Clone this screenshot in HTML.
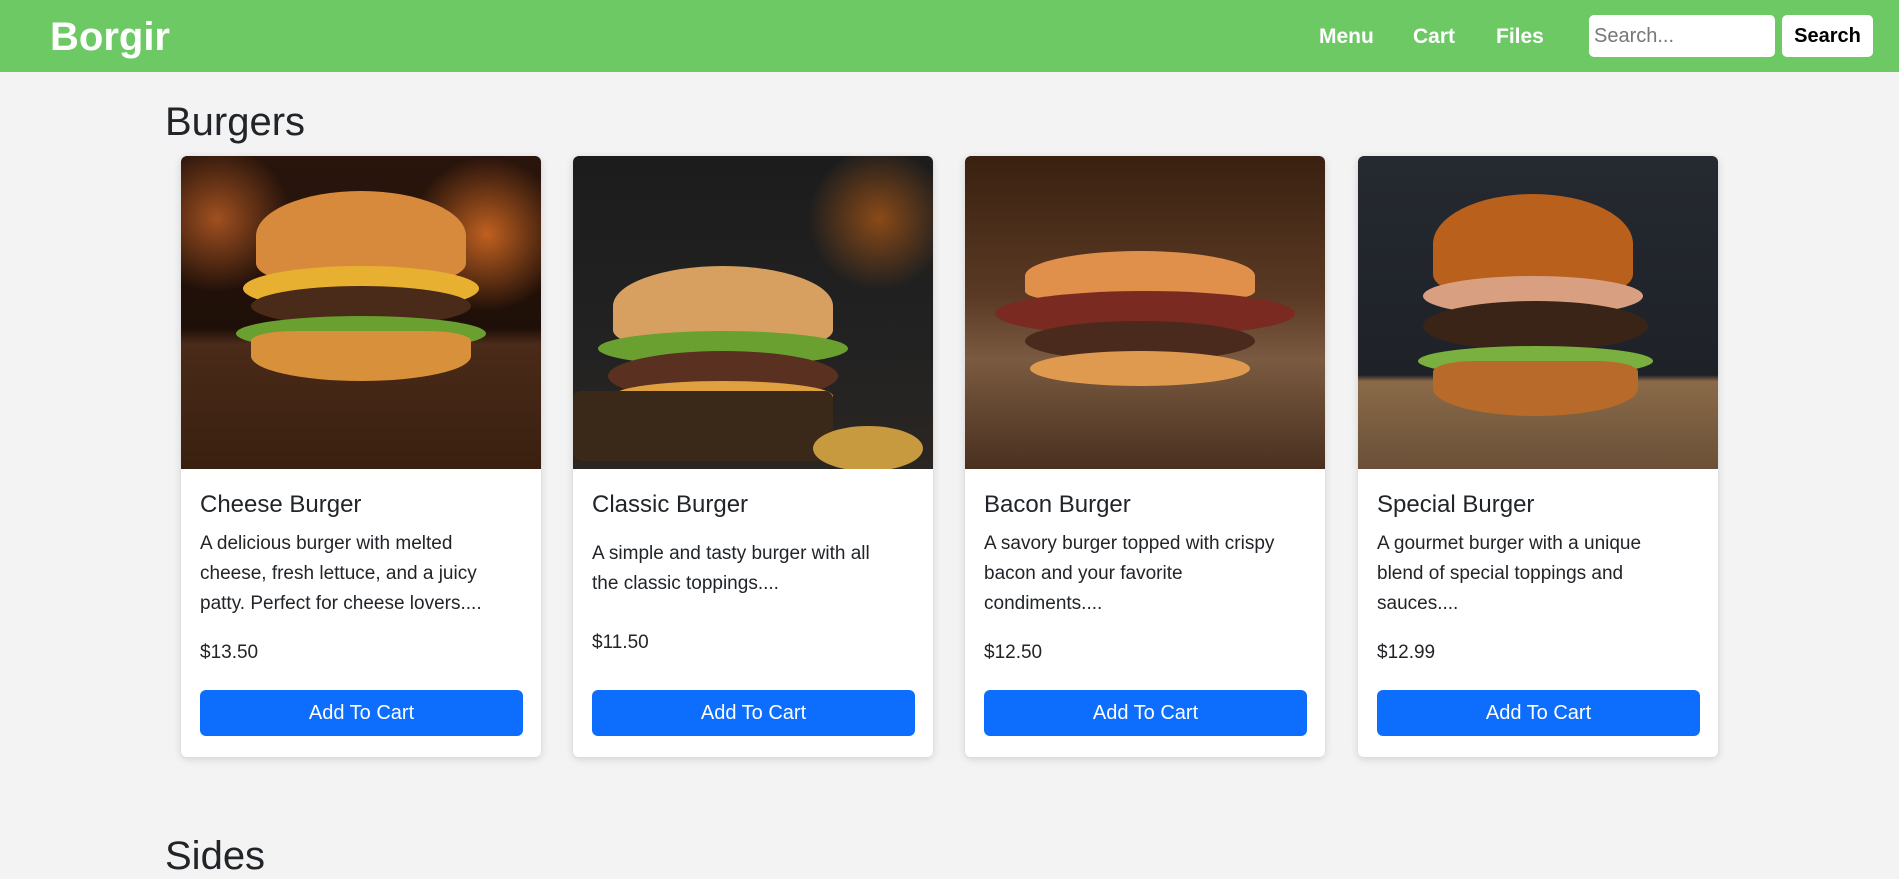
<!DOCTYPE html>
<html><head><meta charset="utf-8"><style>
*{margin:0;padding:0;box-sizing:border-box}
body{width:1899px;height:868px;overflow:hidden;background:#f3f3f3;font-family:"Liberation Sans",Arial,sans-serif;color:#212529;position:relative}
.nav{position:absolute;left:0;top:0;width:1899px;height:72px;background:#6cc964}
.logo{position:absolute;left:50px;top:15px;font-size:40px;font-weight:bold;color:#fff}
.nl{position:absolute;top:25px;font-size:21px;font-weight:bold;color:#fff}
.inp{position:absolute;left:1589px;top:15px;width:186px;height:42px;background:#fff;border-radius:5px;font-size:20px;color:#777;padding:10px 5px}
.sb{position:absolute;left:1782px;top:15px;width:91px;height:42px;background:#fff;border-radius:5px;font-size:20px;font-weight:bold;color:#000;text-align:center;line-height:42px}
h2{position:absolute;left:165px;font-weight:normal;font-size:40px;color:#212529}
.card{position:absolute;top:156px;width:360px;height:601px;background:#fff;border-radius:6px;box-shadow:0 2px 8px rgba(0,0,0,.15);overflow:hidden}
.img{height:313px;position:relative;overflow:hidden}
.t{position:absolute;left:19px;top:335px;font-size:24px}
.d{position:absolute;left:19px;width:300px;font-size:19px;line-height:30px}
.p{position:absolute;left:19px;font-size:19px}
.b{position:absolute;left:19px;top:534px;width:323px;height:46px;background:#0d6efd;border-radius:6px;color:#fff;font-size:20px;text-align:center;line-height:46px}
.bl{position:absolute;border-radius:50%}
</style></head><body>
<div class="nav"><div class="logo">Borgir</div>
<div class="nl" style="left:1319px">Menu</div><div class="nl" style="left:1413px">Cart</div><div class="nl" style="left:1496px">Files</div>
<div class="inp">Search...</div><div class="sb">Search</div></div>
<h2 style="top:100px">Burgers</h2>

<div class="card" style="left:181px"><div class="img" style="background:radial-gradient(circle at 85% 25%,#c06020 0,transparent 20%),radial-gradient(circle at 10% 20%,#a05020 0,transparent 18%),linear-gradient(#2a150c 0,#1e0f08 55%,#4a2a18 60%,#3a2010 100%)">
<div class="bl" style="left:75px;top:35px;width:210px;height:90px;background:#d88a3c;border-radius:50% 50% 20% 20%"></div>
<div class="bl" style="left:62px;top:110px;width:236px;height:45px;background:#e8b030"></div>
<div class="bl" style="left:70px;top:130px;width:220px;height:40px;background:#4a2a18"></div>
<div class="bl" style="left:55px;top:160px;width:250px;height:35px;background:#6aa030"></div>
<div class="bl" style="left:70px;top:175px;width:220px;height:50px;background:#d8903a;border-radius:20% 20% 50% 50%"></div></div>
<div class="t">Cheese Burger</div><div class="d" style="top:373px">A delicious burger with melted cheese, fresh lettuce, and a juicy patty. Perfect for cheese lovers....</div><div class="p" style="top:486px">$13.50</div><div class="b">Add To Cart</div></div>

<div class="card" style="left:573px"><div class="img" style="background:radial-gradient(circle at 85% 20%,#8a4a18 0,transparent 18%),linear-gradient(#1c1c1c 0,#222 60%,#2a2622 100%)">
<div class="bl" style="left:40px;top:110px;width:220px;height:80px;background:#d8a060;border-radius:50% 50% 20% 20%"></div>
<div class="bl" style="left:25px;top:175px;width:250px;height:35px;background:#6aa030"></div>
<div class="bl" style="left:35px;top:195px;width:230px;height:50px;background:#5a3020"></div>
<div class="bl" style="left:40px;top:225px;width:220px;height:30px;background:#e0a040"></div>
<div class="bl" style="left:0;top:235px;width:260px;height:70px;background:#3a2818;border-radius:8px"></div>
<div class="bl" style="left:240px;top:270px;width:110px;height:45px;background:#c89a40"></div></div>
<div class="t">Classic Burger</div><div class="d" style="top:383px">A simple and tasty burger with all the classic toppings....</div><div class="p" style="top:476px">$11.50</div><div class="b">Add To Cart</div></div>

<div class="card" style="left:965px"><div class="img" style="background:linear-gradient(#3a2010 0,#5a3a24 45%,#7a5a40 65%,#4a3020 100%)">
<div class="bl" style="left:60px;top:95px;width:230px;height:50px;background:#e0904a;border-radius:50% 50% 20% 20%"></div>
<div class="bl" style="left:30px;top:135px;width:300px;height:45px;background:#7a2a20"></div>
<div class="bl" style="left:60px;top:165px;width:230px;height:40px;background:#4a2a1c"></div>
<div class="bl" style="left:65px;top:195px;width:220px;height:35px;background:#e09a50"></div></div>
<div class="t">Bacon Burger</div><div class="d" style="top:373px">A savory burger topped with crispy bacon and your favorite condiments....</div><div class="p" style="top:486px">$12.50</div><div class="b">Add To Cart</div></div>

<div class="card" style="left:1358px"><div class="img" style="background:linear-gradient(#252a30 0,#1e2228 70%,#8a6a48 72%,#6a5038 100%)">
<div class="bl" style="left:75px;top:38px;width:200px;height:100px;background:#b8601c;border-radius:50% 50% 20% 20%"></div>
<div class="bl" style="left:65px;top:120px;width:220px;height:40px;background:#d8a080"></div>
<div class="bl" style="left:65px;top:145px;width:225px;height:50px;background:#3a2418"></div>
<div class="bl" style="left:60px;top:190px;width:235px;height:30px;background:#7ab040"></div>
<div class="bl" style="left:75px;top:205px;width:205px;height:55px;background:#b86a2a;border-radius:20% 20% 50% 50%"></div></div>
<div class="t">Special Burger</div><div class="d" style="top:373px">A gourmet burger with a unique blend of special toppings and sauces....</div><div class="p" style="top:486px">$12.99</div><div class="b">Add To Cart</div></div>

<h2 style="top:834px">Sides</h2>
</body></html>
